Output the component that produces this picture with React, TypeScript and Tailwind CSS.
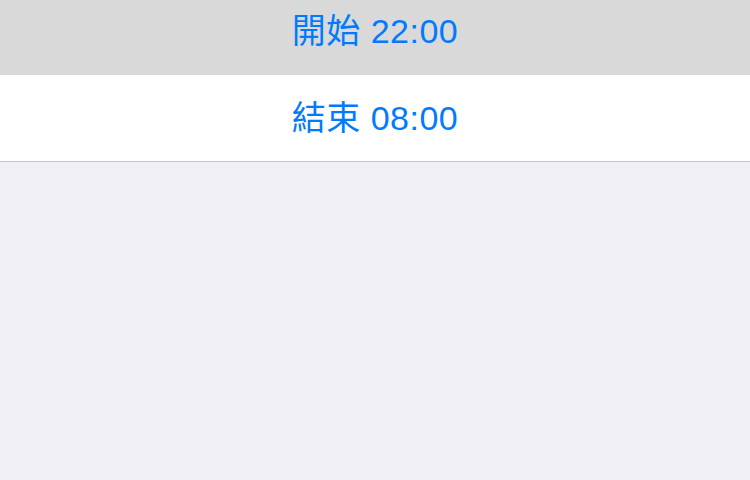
export default function App() {
  return (
    <div
      className="w-[750px] h-[480px] bg-[#efeff4] flex flex-col overflow-hidden"
      style={{ fontFamily: '"Liberation Sans", "Noto Sans CJK TC", sans-serif' }}
    >
      {/* Selected row, scrolled partly out of view */}
      <div className="h-[75px] bg-[#d9d9d9] flex items-center justify-center pb-[13px]">
        <span className="text-[34px] tracking-[0.5px] leading-none text-[#007aff]">開始 22:00</span>
      </div>
      <div className="h-[87px] bg-white border-b border-[#c8c7cc] flex items-center justify-center">
        <span className="text-[34px] tracking-[0.5px] leading-none text-[#007aff]">結束 08:00</span>
      </div>
    </div>
  );
}
